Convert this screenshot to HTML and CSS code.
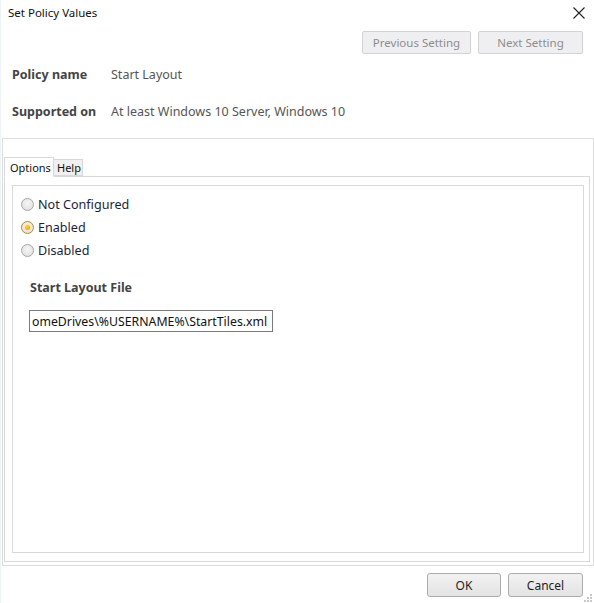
FILE: index.html
```html
<!DOCTYPE html>
<html>
<head>
<meta charset="utf-8">
<link rel="stylesheet" href="styles.css">
</head>
<body>
<div class="window">
  <div class="titlebar">
    <span class="title">Set Policy Values</span>
    <svg class="close" width="12" height="12" viewBox="0 0 12 12"><path d="M0.5 0.5 L11.5 11.5 M11.5 0.5 L0.5 11.5" stroke="#222" stroke-width="1.1" fill="none"/></svg>
  </div>
  <div class="navrow">
    <button class="btn btn-disabled prev">Previous Setting</button>
    <button class="btn btn-disabled next">Next Setting</button>
  </div>
  <div class="info">
    <div class="inforow r1"><span class="label">Policy name</span><span class="value">Start Layout</span></div>
    <div class="inforow r2"><span class="label">Supported on</span><span class="value">At least Windows 10 Server, Windows 10</span></div>
  </div>
  <div class="group">
    <div class="tabs">
      <div class="tab active">Options</div>
      <div class="tab">Help</div>
    </div>
    <div class="tabpanel">
      <div class="content">
        <div class="radio"><span class="dot"></span>Not Configured</div>
        <div class="radio"><span class="dot checked"></span>Enabled</div>
        <div class="radio"><span class="dot"></span>Disabled</div>
        <div class="field-label">Start Layout File</div>
        <div class="input"><span class="input-text">omeDrives\%USERNAME%\StartTiles.xml</span></div>
      </div>
    </div>
  </div>
  <div class="footer">
    <button class="btn btn-ok">OK</button>
    <button class="btn btn-cancel">Cancel</button>
    <svg class="grip" width="8" height="8" viewBox="0 0 8 8">
      <rect x="6" y="0" width="2" height="2" fill="#c8c8c8"/>
      <rect x="3" y="3" width="2" height="2" fill="#c8c8c8"/>
      <rect x="6" y="3" width="2" height="2" fill="#c8c8c8"/>
      <rect x="0" y="6" width="2" height="2" fill="#c8c8c8"/>
      <rect x="3" y="6" width="2" height="2" fill="#c8c8c8"/>
      <rect x="6" y="6" width="2" height="2" fill="#c8c8c8"/>
    </svg>
  </div>
</div>
</body>
</html>
```
FILE: styles.css
```css
html, body {
  margin: 0;
  padding: 0;
  background: #ffffff;
}
body {
  font-family: "Noto Sans", "Open Sans", sans-serif;
  color: #1e1e1e;
}
.window {
  width: 594px;
  height: 603px;
  position: relative;
  background: #fff;
  border-left: 1px solid #eef3f8;
  box-sizing: border-box;
  overflow: hidden;
}
.titlebar {
  height: 27px;
  display: flex;
  align-items: flex-start;
  justify-content: space-between;
  padding: 0 9px 0 7px;
}
.title {
  font-size: 11.5px;
  line-height: 14px;
  padding-top: 6px;
  color: #111;
}
.close {
  margin-top: 7px;
}
.navrow {
  display: flex;
  justify-content: flex-end;
  gap: 7px;
  padding-right: 11px;
  padding-top: 4px;
  height: 23px;
}
.btn {
  font-family: "Noto Sans", "Open Sans", sans-serif;
  font-size: 11.5px;
  height: 23px;
  box-sizing: border-box;
  padding: 0;
  border-radius: 2px;
}
.btn-disabled {
  background: #efeff1;
  border: 1px solid #d3d3d6;
  color: #8d8d8d;
}
.prev { width: 109px; }
.next { width: 105px; }
.info {
  padding: 11px 0 0 11px;
  height: 73px;
}
.inforow {
  display: flex;
  align-items: center;
  height: 18px;
  font-size: 12.5px;
}
.r2 { margin-top: 19px; }
.label {
  width: 99px;
  font-weight: bold;
  color: #444;
}
.value {
  color: #555;
}
.group {
  margin-left: 1px;
  width: 592px;
  height: 428px;
  box-sizing: border-box;
  border: 1px solid #dcdcdc;
  padding: 19px 3px 3px 1px;
  display: flex;
  flex-direction: column;
}
.tabs {
  display: flex;
  align-items: flex-end;
  height: 19px;
  position: relative;
  z-index: 1;
  margin-bottom: -1px;
}
.tab {
  font-size: 11px;
  box-sizing: border-box;
  border: 1px solid #d9d9d9;
  color: #111;
}
.tab.active {
  width: 50px;
  height: 20px;
  background: #fff;
  border-bottom: 1px solid #fff;
  padding: 2px 0 0 5px;
}
.tab:not(.active) {
  width: 29px;
  height: 17px;
  background: #f0f0f0;
  border-left: none;
  padding: 0 0 0 3px;
  line-height: 16px;
  margin-bottom: 1px;
}
.tabpanel {
  flex: 1;
  border: 1px solid #d9d9d9;
  padding: 8px 5px 8px 7px;
  display: flex;
}
.content {
  flex: 1;
  border: 1px solid #d9d9d9;
  padding: 7px 0 0 8px;
}
.radio {
  display: flex;
  align-items: center;
  height: 23px;
  font-size: 12.6px;
  color: #1e1e3c;
}
.dot {
  width: 11px;
  height: 11px;
  border-radius: 50%;
  border: 1px solid #a6a6a6;
  background: radial-gradient(circle at 50% 40%, #f6f6f6 0%, #dcdcdc 100%);
  margin-right: 4px;
  position: relative;
  box-sizing: content-box;
}
.dot.checked {
  border-color: #b08a3a;
}
.dot.checked::after {
  content: "";
  position: absolute;
  left: 3px;
  top: 3px;
  width: 5px;
  height: 5px;
  border-radius: 50%;
  background: radial-gradient(circle at 40% 35%, #ffd24a 0%, #f0a000 85%);
  box-shadow: 0 0 0 1px #ffe9a8;
}
.field-label {
  font-weight: bold;
  font-size: 12.5px;
  color: #444;
  margin: 17px 0 0 9px;
  height: 18px;
}
.input {
  margin: 13px 0 0 8px;
  width: 244px;
  height: 22px;
  box-sizing: border-box;
  border: 1px solid #7a7a7a;
  white-space: nowrap;
  display: flex;
  align-items: center;
  padding-left: 2px;
  font-size: 12.3px;
  color: #111;
}
.footer {
  display: flex;
  justify-content: flex-end;
  gap: 7px;
  padding: 7px 11px 0 0;
  position: relative;
}
.btn-ok, .btn-cancel {
  width: 75px;
  height: 24px;
  border: 1px solid #acacac;
  border-radius: 3px;
  background: linear-gradient(#f2f2f2, #e3e3e3);
  color: #1e1e1e;
  font-size: 12px;
}
.btn-ok { width: 74px; }
.grip {
  position: absolute;
  right: 2px;
  top: 28px;
}
```
